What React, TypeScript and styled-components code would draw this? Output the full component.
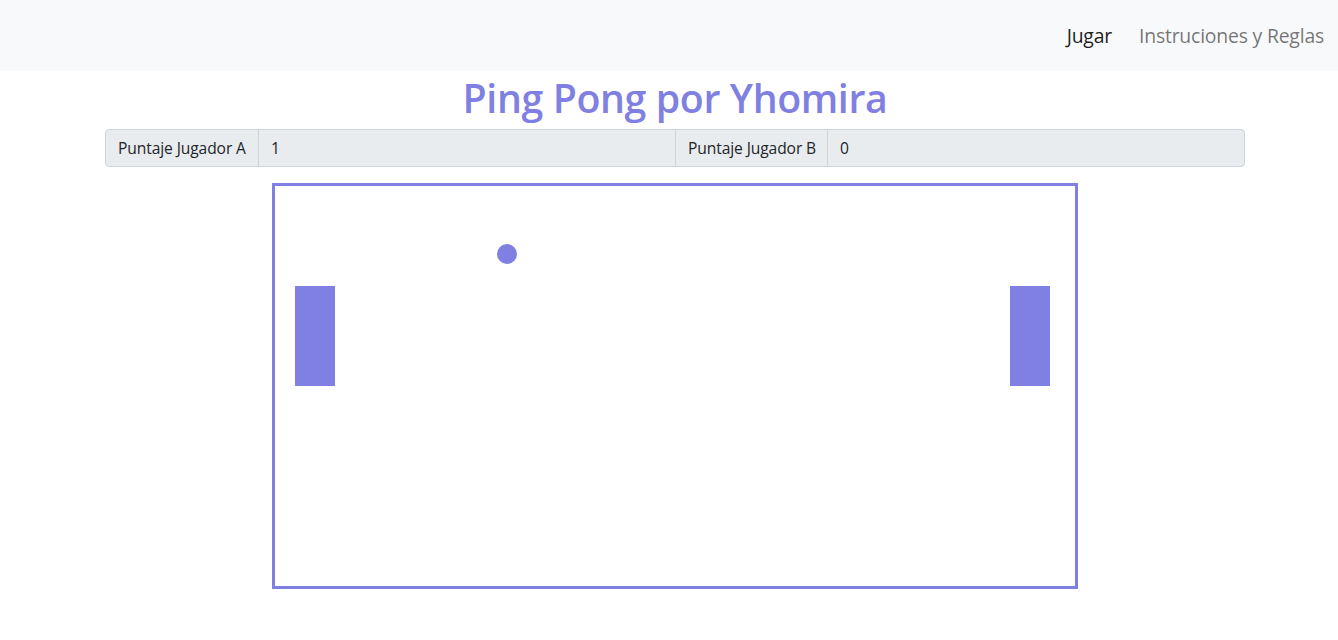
import React from "react";
import styled, { createGlobalStyle } from "styled-components";

const Global = createGlobalStyle`
  html, body { margin: 0; padding: 0; background: #fff; }
  body { font-family: "Open Sans", "Noto Sans", "Liberation Sans", sans-serif; color: #212529; }
`;

const ACCENT = "#8080e2";

const Navbar = styled.nav`
  height: 71px;
  background: #f8f9fa;
  display: flex;
  align-items: center;
  justify-content: flex-end;
  gap: 11px;
  padding: 0 6px 0 0;
  box-sizing: border-box;
`;

const NavLink = styled.a<{ $active?: boolean }>`
  font-size: 19.4px;
  padding: 0 8px;
  text-decoration: none;
  letter-spacing: -0.2px;
  color: ${(p) => (p.$active ? "rgba(0,0,0,0.9)" : "rgba(0,0,0,0.55)")};
  cursor: pointer;
`;

const Main = styled.main`
  padding-left: 12px;
  display: flex;
  flex-direction: column;
  align-items: center;
`;

const Title = styled.h1`
  margin: 4px 0 7px;
  font-size: 39.3px;
  line-height: 47px;
  font-weight: 600;
  letter-spacing: -0.4px;
  color: ${ACCENT};
`;

const Group = styled.div`
  width: 1140px;
  height: 38px;
  display: flex;
  border: 1px solid #ced4da;
  border-radius: 4px;
  box-sizing: border-box;
  background: #e9ecef;
  overflow: hidden;
`;

const Label = styled.div<{ $w: number }>`
  width: ${(p) => p.$w}px;
  flex: none;
  display: flex;
  align-items: center;
  padding-left: 12px;
  font-size: 15.6px;
  letter-spacing: -0.1px;
  color: #212529;
  border-right: 1px solid #ced4da;
  box-sizing: border-box;
  white-space: nowrap;
`;

const Value = styled.div<{ $last?: boolean }>`
  flex: 1;
  display: flex;
  align-items: center;
  padding: 0 12px;
  font-size: 15.6px;
  color: #212529;
  border-right: ${(p) => (p.$last ? "none" : "1px solid #ced4da")};
`;

const Board = styled.div`
  margin-top: 16px;
  width: 800px;
  height: 400px;
  border: 3px solid ${ACCENT};
  background: #fff;
`;

const Field = styled.svg`
  display: block;
`;

export default function App() {
  return (
    <>
      <Global />
      <Navbar>
        <NavLink $active>Jugar</NavLink>
        <NavLink>Instruciones y Reglas</NavLink>
      </Navbar>
      <Main>
        <Title>Ping Pong por Yhomira</Title>
        <Group>
          <Label $w={153}>Puntaje Jugador A</Label>
          <Value>1</Value>
          <Label $w={152}>Puntaje Jugador B</Label>
          <Value $last>0</Value>
        </Group>
        <Board>
          <Field width={800} height={400} viewBox="0 0 800 400">
            <rect x={20} y={100} width={40} height={100} fill={ACCENT} />
            <rect x={735} y={100} width={40} height={100} fill={ACCENT} />
            <circle cx={232} cy={68} r={10} fill={ACCENT} />
          </Field>
        </Board>
      </Main>
    </>
  );
}
